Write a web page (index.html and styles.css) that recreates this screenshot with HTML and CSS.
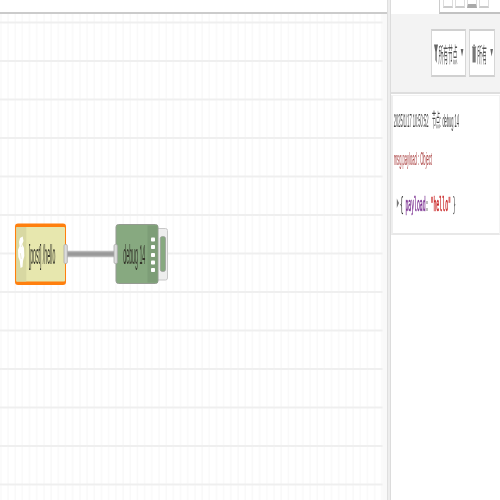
FILE: index.html
```
<!DOCTYPE html>
<html lang="zh">
<head>
<meta charset="utf-8">
<title>Flow editor</title>
<link rel="stylesheet" href="styles.css">
</head>
<body>
<div class="editor">
  <main class="workspace">
    <div class="tabbar"></div>
    <svg class="canvas" viewBox="0 14 387 486">
      <defs>
        <pattern id="cols" x="-2.9" y="0" width="7.19" height="500" patternUnits="userSpaceOnUse"><rect x="3" width="1.6" height="500" fill="#f9f9f9"/></pattern>
        <pattern id="rows" x="0" y="21.5" width="387" height="38.5" patternUnits="userSpaceOnUse"><rect width="387" height="2" fill="#efefef"/></pattern>
      </defs>
      <rect y="14" width="383" height="486" fill="url(#cols)"/>
      <rect y="14" width="383" height="486" fill="url(#rows)"/>
      <rect x="382.5" y="14" width="4.5" height="486" fill="#f9f9f9"/>
      <path d="M66 254H115" stroke="#999" stroke-width="5.500"/>
      <path d="M66 251.500H115M66 256.500H115" stroke="#bababa" stroke-width="1.500"/>

      <rect x="15" y="223.500" width="51" height="61.500" rx="3" fill="#ff7f0e"/>
      <rect x="16.300" y="227" width="48.700" height="54.500" rx="1" fill="#e7e7ae"/>
      <rect x="16.300" y="227" width="10" height="54.500" fill="#d8d8a2"/>
      <path d="M20 238L22.700 236.500L23.500 241L22.300 244L24 248L24.300 256L23 261L22.500 267L20.500 268L19.800 261L18.300 257L18 250L19.500 246L19 242Z" fill="#fff"/>
      <path d="M22.500 244L21.200 247M20.300 253L21.300 259" stroke="#e6e6cc" stroke-width=".8"/>
      <text class="node-label" transform="translate(28.700 264) scale(.18 1)" textLength="147.800" lengthAdjust="spacingAndGlyphs">[post] /hello</text>
      <rect class="port" x="64" y="244.500" width="3.300" height="19" rx="1.300"/>

      <rect x="156" y="228.500" width="11.500" height="51.500" rx="2" fill="#eee" stroke="#c8c8c8"/>
      <rect x="160.300" y="236.500" width="5.200" height="35" rx="2" fill="#87a980" stroke="#999" stroke-width=".7"/>
      <rect x="116" y="224.500" width="42" height="59" rx="2.500" fill="#87a980" stroke="#949b91"/>
      <rect x="147.500" y="225.500" width="10" height="57" fill="#7d9d77"/>
      <g fill="#fff"><rect x="151" y="237.500" width="4" height="4" rx=".8"/><rect x="151" y="245" width="4" height="4" rx=".8"/><rect x="151" y="253" width="4" height="4" rx=".8"/><rect x="151" y="260.500" width="4" height="4" rx=".8"/><rect x="151" y="268" width="4" height="4" rx=".8"/></g>
      <text class="node-label" transform="translate(123.300 264) scale(.2 1)" textLength="110" lengthAdjust="spacingAndGlyphs">debug 14</text>
      <rect class="port" x="114" y="244.500" width="3.300" height="19" rx="1.300"/>
    </svg>
  </main>
  <div class="separator"></div>
  <aside class="sidebar">
    <div class="tabs"><div class="tab-icons"><i></i><i></i><i class="active"></i><i></i></div></div>
    <div class="toolbar">
      <div class="button filter">
        <svg width="33" height="44" viewBox="0 0 33 44"><path d="M2 13.500H6L4.700 21V32L3.400 29V21Z" fill="#666"/><text class="button-label" transform="translate(6.500 31) scale(.22 1)" textLength="86" lengthAdjust="spacingAndGlyphs">所有节点</text><path d="M28.700 18H31.400L30.050 25.500Z" fill="#666"/></svg>
      </div>
      <div class="button clear">
        <svg width="24" height="44" viewBox="0 0 24 44"><path d="M2.500 16H5.700V31.500H2.500ZM3.400 13.500H4.800V15H3.400Z" fill="#777"/><path d="M2 16H6.200" stroke="#666"/><text class="button-label" transform="translate(7.200 31) scale(.22 1)" textLength="43" lengthAdjust="spacingAndGlyphs">所有</text><path d="M20.300 18H23L21.650 25.500Z" fill="#666"/></svg>
      </div>
    </div>
    <div class="message">
      <svg width="106" height="137" viewBox="393 96 106 137">
        <text class="meta" transform="translate(393.700 127.300) scale(.212 1)" textLength="164" lengthAdjust="spacingAndGlyphs">2025/1/17 10:50:52</text>
        <text class="meta" transform="translate(432 127.300) scale(.212 1)" textLength="38" lengthAdjust="spacingAndGlyphs">节点</text>
        <text class="meta" transform="translate(440.200 127.300) scale(.212 1)" textLength="88" lengthAdjust="spacingAndGlyphs">: debug 14</text>
        <text class="topic" transform="translate(393.700 165) scale(.22 1)" textLength="174" lengthAdjust="spacingAndGlyphs">msg.payload : Object</text>
        <path d="M396.800 198.500L399 203L396.800 208Z" fill="#777"/>
        <text class="code" transform="translate(399.700 210.500) scale(.25 1)"><tspan textLength="16" lengthAdjust="spacingAndGlyphs">{</tspan></text>
        <text class="code key" transform="translate(405.500 210.500) scale(.25 1)" textLength="80" lengthAdjust="spacingAndGlyphs">payload</text>
        <text class="code" transform="translate(425.500 210.500) scale(.25 1)">:</text>
        <text class="code value" transform="translate(430.500 210.500) scale(.25 1)" textLength="82" lengthAdjust="spacingAndGlyphs">"hello"</text>
        <text class="code" transform="translate(452.700 210.500) scale(.25 1)">}</text>
      </svg>
    </div>
  </aside>
</div>
</body>
</html>
```
FILE: styles.css
```
* { box-sizing: border-box; }
body { margin: 0; background: #fff; font-family: "Liberation Sans", "Noto Sans CJK SC", sans-serif; }
svg { display: block; will-change: transform; }
.editor { display: flex; width: 500px; height: 500px; overflow: hidden; }
.workspace { width: 387px; }
.tabbar { height: 14px; border-bottom: 2px solid #cbcbcb; }
.canvas { width: 387px; height: 486px; }
.separator { width: 4px; background: #ededed; border-left: 1px solid #dfdfdf; border-right: 1px solid #dcdcdc; }
.sidebar { width: 109px; }
.tabs { height: 14px; display: flex; justify-content: flex-end; }
.tab-icons { width: 61px; height: 14px; display: flex; gap: 2px; padding-left: 3px; border-left: 1px solid #ccc; border-bottom: 2px solid #c2c2c2; }
.tab-icons i { width: 10px; height: 8px; border: 1px solid #ddd; border-top: 0; border-bottom: 2px solid #ccc; }
.tab-icons .active { border-bottom: 4px solid #aaa; }
.toolbar { height: 80px; display: flex; gap: 3px; padding: 15px 4px 0 40px; background: #f3f3f3; border-bottom: 2px solid #dedede; }
.button { height: 48px; background: #fff; border: 1px solid #d6d6d6; border-top: 2px solid #d0d0d0; border-bottom: 2px solid #d0d0d0; }
.filter { width: 35px; }
.clear { width: 26px; }
.message { width: 109px; height: 140px; margin-top: 1px; border: 1px solid #f3f3f3; border-left: 2px solid #eee; border-bottom: 2px solid #e8e8e8; }
.node-label { font-size: 27px; fill: #333329; }
.port { fill: #ddd; stroke: #aaa; stroke-width: .8px; }
.button-label { font-size: 21px; fill: #555; font-family: "Noto Sans CJK SC", sans-serif; }
.meta { font-size: 19px; fill: #444; }
.topic { font-size: 19px; fill: #a83c3c; }
.code { font-family: "DejaVu Sans Mono", monospace; font-size: 20px; fill: #333; stroke: currentColor; stroke-width: 0; }
.key { fill: #792e90; stroke: #792e90; stroke-width: .6px; }
.value { fill: #c82020; stroke: #c82020; stroke-width: .6px; }
```
